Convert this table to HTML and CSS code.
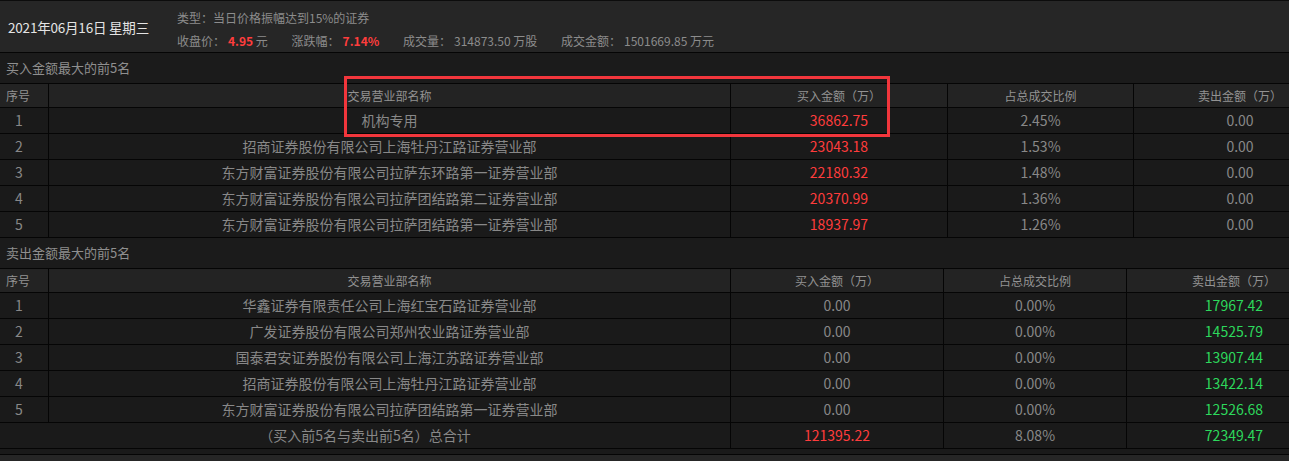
FILE: index.html
```html
<!DOCTYPE html>
<html lang="zh-CN">
<head>
<meta charset="utf-8">
<title>龙虎榜</title>
<link rel="stylesheet" href="styles.css">
</head>
<body>
<div class="page">
  <div class="top">
    <div class="date">2021年06月16日 星期三</div>
    <div class="info">
      <div class="info-line">类型：当日价格振幅达到15%的证券</div>
      <div class="info-line">
        <span class="item">收盘价：<b class="red">4.95</b> 元</span>
        <span class="item">涨跌幅：<b class="red">7.14%</b></span>
        <span class="item">成交量：<b>314873.50</b> 万股</span>
        <span class="item">成交金额：<b>1501669.85</b> 万元</span>
      </div>
    </div>
  </div>

  <div class="section-title">买入金额最大的前5名</div>
  <table class="grid">
    <colgroup><col class="c-no"><col class="c-name"><col class="c-buy"><col class="c-ratio"><col class="c-sell"></colgroup>
    <thead>
      <tr><th class="no">序号</th><th>交易营业部名称</th><th>买入金额（万）</th><th>占总成交比例</th><th>卖出金额（万）</th></tr>
    </thead>
    <tbody>
      <tr><td class="no">1</td><td>机构专用</td><td class="red">36862.75</td><td>2.45%</td><td>0.00</td></tr>
      <tr><td class="no">2</td><td>招商证券股份有限公司上海牡丹江路证券营业部</td><td class="red">23043.18</td><td>1.53%</td><td>0.00</td></tr>
      <tr><td class="no">3</td><td>东方财富证券股份有限公司拉萨东环路第一证券营业部</td><td class="red">22180.32</td><td>1.48%</td><td>0.00</td></tr>
      <tr><td class="no">4</td><td>东方财富证券股份有限公司拉萨团结路第二证券营业部</td><td class="red">20370.99</td><td>1.36%</td><td>0.00</td></tr>
      <tr><td class="no">5</td><td>东方财富证券股份有限公司拉萨团结路第一证券营业部</td><td class="red">18937.97</td><td>1.26%</td><td>0.00</td></tr>
    </tbody>
  </table>

  <div class="section-title">卖出金额最大的前5名</div>
  <table class="grid grid-sell">
    <colgroup><col class="c-no"><col class="c-name"><col class="c-buy2"><col class="c-ratio2"><col class="c-sell"></colgroup>
    <thead>
      <tr><th class="no">序号</th><th>交易营业部名称</th><th>买入金额（万）</th><th>占总成交比例</th><th>卖出金额（万）</th></tr>
    </thead>
    <tbody>
      <tr><td class="no">1</td><td>华鑫证券有限责任公司上海红宝石路证券营业部</td><td>0.00</td><td>0.00%</td><td class="green">17967.42</td></tr>
      <tr><td class="no">2</td><td>广发证券股份有限公司郑州农业路证券营业部</td><td>0.00</td><td>0.00%</td><td class="green">14525.79</td></tr>
      <tr><td class="no">3</td><td>国泰君安证券股份有限公司上海江苏路证券营业部</td><td>0.00</td><td>0.00%</td><td class="green">13907.44</td></tr>
      <tr><td class="no">4</td><td>招商证券股份有限公司上海牡丹江路证券营业部</td><td>0.00</td><td>0.00%</td><td class="green">13422.14</td></tr>
      <tr><td class="no">5</td><td>东方财富证券股份有限公司拉萨团结路第一证券营业部</td><td>0.00</td><td>0.00%</td><td class="green">12526.68</td></tr>
      <tr><td colspan="2">（买入前5名与卖出前5名）总合计</td><td class="red">121395.22</td><td>8.08%</td><td class="green">72349.47</td></tr>
    </tbody>
  </table>
  <div class="gap"></div>
  <div class="footer"></div>

  <div class="highlight"></div>
</div>
</body>
</html>
```

FILE: styles.css
```css
html, body {
  margin: 0;
  padding: 0;
  background: #1a1a1a;
  overflow: hidden;
}
body {
  font-family: "Noto Sans CJK SC", "Noto Sans", sans-serif;
  color: #8a8a8a;
}
.page {
  position: relative;
  width: 1289px;
  height: 461px;
  overflow: hidden;
}
.top {
  height: 51px;
  border-top: 1px solid #0c0c0c;
  border-bottom: 1px solid #050505;
  background: #262626;
  display: flex;
  align-items: stretch;
}
.date {
  width: 177px;
  flex: none;
  padding-left: 8px;
  font-size: 13.5px;
  letter-spacing: -0.2px;
  color: #e4e4e4;
  line-height: 51px;
  padding-top: 1px;
  box-sizing: border-box;
  white-space: nowrap;
}
.info {
  display: flex;
  flex-direction: column;
  font-size: 12px;
  color: #8c8c8c;
  padding-top: 6px;
}
.info-line {
  height: 24px;
  line-height: 21px;
  white-space: nowrap;
}
.info .item {
  margin-right: 21px;
}
.info b {
  font-weight: normal;
  margin-left: 3px;
}
.info b.red {
  color: #ff3d3d;
  font-weight: bold;
}
.section-title {
  height: 30px;
  line-height: 30px;
  padding-left: 6px;
  font-size: 13px;
  color: #8f8f8f;
  background: #1b1b1b;
}
.grid {
  border-collapse: separate;
  border-spacing: 0;
  table-layout: fixed;
  width: 1347px;
  border-top: 1px solid #050505;
}
.grid th, .grid td {
  padding: 0;
  text-align: center;
  border-right: 1px solid #050505;
  border-bottom: 1px solid #050505;
  white-space: nowrap;
  overflow: hidden;
  box-sizing: border-box;
}
.grid th {
  font-weight: normal;
  font-size: 12px;
  line-height: 23px;
  color: #929292;
  background: #232323;
}
.grid td {
  font-size: 14px;
  line-height: 25px;
  color: #888888;
  background: #1a1a1a;
}
.grid th.no {
  text-align: left;
  padding-left: 6px;
}
.grid td.no {
  text-align: left;
  padding-left: 15px;
}
.c-no { width: 49px; }
.c-name { width: 682px; }
.c-buy { width: 217px; }
.c-ratio { width: 186px; }
.c-buy2 { width: 213px; }
.c-ratio2 { width: 183px; }
.grid-sell { width: 1342px; }
.grid td.red { color: #ff3c3c; }
.grid td.green { color: #2dd85c; }
.gap {
  height: 5px;
  border-bottom: 1px solid #050505;
  background: #1a1a1a;
}
.footer {
  height: 20px;
  background: #262626;
}
.highlight {
  position: absolute;
  left: 344px;
  top: 76px;
  width: 546px;
  height: 61px;
  border: 3px solid #f2363c;
  box-sizing: border-box;
}
```
